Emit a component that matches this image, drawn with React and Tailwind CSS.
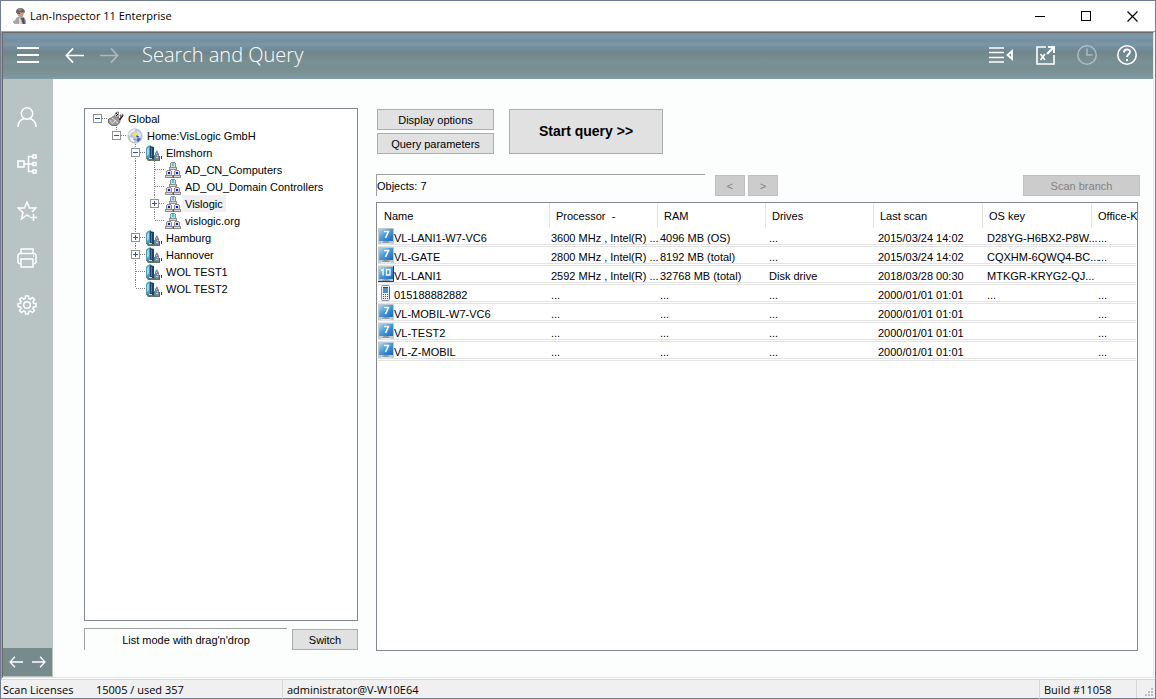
// ─── Data ─────────────────────────────────────────────────────
// guides: one cell per indent level, the last one belongs to the node itself
const TREE = [
  { label: 'Global', icon: 'global', guides: ['root'], toggle: '-' },
  { label: 'Home:VisLogic GmbH', icon: 'globe', guides: ['blank', 'end'], toggle: '-' },
  { label: 'Elmshorn', icon: 'city', guides: ['blank', 'blank', 'tee'], toggle: '-' },
  { label: 'AD_CN_Computers', icon: 'domain', guides: ['blank', 'blank', 'line', 'tee'] },
  { label: 'AD_OU_Domain Controllers', icon: 'domain', guides: ['blank', 'blank', 'line', 'tee'] },
  { label: 'Vislogic', icon: 'domain', guides: ['blank', 'blank', 'line', 'tee'], toggle: '+', selected: true },
  { label: 'vislogic.org', icon: 'domain', guides: ['blank', 'blank', 'line', 'end'] },
  { label: 'Hamburg', icon: 'city', guides: ['blank', 'blank', 'tee'], toggle: '+' },
  { label: 'Hannover', icon: 'city', guides: ['blank', 'blank', 'tee'], toggle: '+' },
  { label: 'WOL TEST1', icon: 'city', guides: ['blank', 'blank', 'tee'] },
  { label: 'WOL TEST2', icon: 'city', guides: ['blank', 'blank', 'end'] },
]

// pad: inset of the body text, the body grid is slightly wider than the header grid
const COLUMNS = [
  { name: 'Name', width: 'w-[172px]', pad: '' },
  { name: 'Processor  -', width: 'w-[108px]', pad: 'pl-px' },
  { name: 'RAM', width: 'w-[108px]', pad: 'pl-[2px]' },
  { name: 'Drives', width: 'w-[108px]', pad: 'pl-[3px]' },
  { name: 'Last scan', width: 'w-[109px]', pad: 'pl-[4px]' },
  { name: 'OS key', width: 'w-[109px]', pad: 'pl-[4px]' },
  { name: 'Office-K', width: '', pad: 'pl-[6px]' },
]

const ROWS = [
  { icon: '7', cells: ['VL-LANI1-W7-VC6', '3600 MHz , Intel(R) ...', '4096 MB (OS)', '...', '2015/03/24 14:02', 'D28YG-H6BX2-P8W...', '...'] },
  { icon: '7', cells: ['VL-GATE', '2800 MHz , Intel(R) ...', '8192 MB (total)', '...', '2015/03/24 14:02', 'CQXHM-6QWQ4-BC...', '...'] },
  { icon: '10', cells: ['VL-LANI1', '2592 MHz , Intel(R) ...', '32768 MB (total)', 'Disk drive', '2018/03/28 00:30', 'MTKGR-KRYG2-QJ...', ''] },
  { icon: 'phone', cells: ['015188882882', '...', '...', '...', '2000/01/01 01:01', '...', '...'] },
  { icon: '7', cells: ['VL-MOBIL-W7-VC6', '...', '...', '...', '2000/01/01 01:01', '', '...'] },
  { icon: '7', cells: ['VL-TEST2', '...', '...', '...', '2000/01/01 01:01', '', '...'] },
  { icon: '7', cells: ['VL-Z-MOBIL', '...', '...', '...', '2000/01/01 01:01', '', '...'] },
]

// ─── Buttons ──────────────────────────────────────────────────
function Button({ className = '', ...props }) {
  return (
    <button
      className={`border border-[#adadad] bg-[#e1e1e1] disabled:border-[#bfbfbf] disabled:bg-[#cccccc] disabled:text-[#838383] ${className}`}
      {...props}
    />
  )
}

// ─── Tree icons ───────────────────────────────────────────────
function GlobalIcon() {
  return (
    <svg width="16" height="16" viewBox="0 0 16 16">
      <path d="M.5 8l3-1 2-2h4l2 3 .5 3-3 3.500H4L.5 12z" fill="#9c9c9c" stroke="#6e6e6e" />
      <path d="M2 9l2.500 3.500L8 9M4 7l6 5" stroke="#dcdcdc" fill="none" />
      <path d="M6 6l2-4.500 2.500-.5-.5 5z" fill="#ececec" stroke="#777" />
      <path d="M8 2h1v1H8zM9 3h1v1H9zM8 4h1v1H8z" fill="#111" />
      <path d="M11.500 9l3.500-5" stroke="#222" strokeWidth="1.600" />
      <path d="M12 4l1.500 2" stroke="#c33" strokeWidth="1.500" />
      <path d="M14 3l1.500 1.500" stroke="#3aa" strokeWidth="1.500" />
    </svg>
  )
}

function GlobeIcon() {
  return (
    <svg width="16" height="16" viewBox="0 0 16 16">
      <circle cx="8" cy="8" r="7.200" fill="#b9c6de" stroke="#a3aec4" strokeWidth=".6" />
      <path d="M1.500 7c.5-3.500 3.500-6 7-6L7 4 4 5 3 8z" fill="#eef1f4" />
      <path d="M10 2.500l3.500 2.500 1 4-3-.5L9.500 6z" fill="#dfe5ee" />
      <path d="M3 9l3.500 1.500 1 4-4-2z" fill="#f6f8fa" />
      <path d="M10.500 10l3.500.5L11.500 14l-2-1.500z" fill="#4766b0" />
      <path d="M8 3.500v6M5 6.500h6" stroke="#f1e272" strokeWidth="1.500" />
      <path d="M9.500 8l2 1" stroke="#2f4f9c" strokeWidth="1.500" />
      <path d="M6 11l3 1" stroke="#8c97a8" />
    </svg>
  )
}

function CityIcon() {
  return (
    <svg width="16" height="16" viewBox="0 0 16 16">
      <path d="M0 3l2-2 3-1v14H0z" fill="#4aa0c4" />
      <path d="M1 4l2-2v7l-2 2z" fill="#9bd8ec" />
      <path d="M4 1l4 1v13H4z" fill="#1d4468" />
      <path d="M5.500 3v9" stroke="#3c86b4" />
      <path d="M8 10h2v5H8z" fill="#5c8399" />
      <path d="M9 15V8l2-3 2 4v6z" fill="#7d8896" />
      <path d="M10 8.500h1M11 10.500h1M10 12.500h2" stroke="#c7d2dc" />
      <path d="M13 11h1v4h-1z" fill="#41618c" />
      <path d="M15 11h1v3h-1z" fill="#2b3a4c" />
      <path d="M0 13c2 0 4 0 6 1l8 1v1H2z" fill="#5e7763" />
      <path d="M3 13.500h3" stroke="#d3dddd" />
    </svg>
  )
}

function DomainIcon() {
  return (
    <svg width="16" height="16" viewBox="0 0 16 16" shapeRendering="crispEdges">
      <path d="M6 0h4v1h1v4h1v3H4V5h1V1h1z" fill="#8c8c8c" />
      <path d="M2 8h4v1h1v4h1v3H0v-3h1V9h1z" fill="#8c8c8c" />
      <path d="M10 8h4v1h1v4h1v3H8v-3h1V9h1z" fill="#8c8c8c" />
      <path d="M6 1h4v4H6zM5 6h6v1H5z" fill="#dadada" />
      <path d="M2 9h4v4H2zM1 14h6v1H1zM10 9h4v4h-4zM9 14h6v1H9z" fill="#dadada" />
      <path d="M7 1h2v3H7z" fill="#2fd9e0" />
      <path d="M3 10h2v2H3zM11 10h2v2h-2z" fill="#1414d8" />
      <path d="M8 13v3" stroke="#5a5a5a" />
    </svg>
  )
}

function TreeIcon({ name }) {
  if (name === 'global') return <GlobalIcon />
  if (name === 'globe') return <GlobeIcon />
  if (name === 'city') return <CityIcon />
  return <DomainIcon />
}

// ─── Tree ─────────────────────────────────────────────────────
function GuideCell({ kind, toggle }) {
  const up = kind === 'tee' || kind === 'end' || kind === 'line'
  const down = kind === 'tee' || kind === 'line'
  return (
    <svg width="19" height="17" viewBox="0 0 19 17" className="block" shapeRendering="crispEdges">
      <g stroke="#808080" strokeDasharray="1 1" fill="none">
        {up && <path d="M9.500 0v8" />}
        {down && <path d="M9.500 8v9" />}
        {(kind === 'root' || kind === 'tee' || kind === 'end') && <path d="M10 8.500h9" />}
      </g>
      {toggle && (
        <>
          <rect x="5.500" y="4.500" width="8" height="8" fill="#fff" stroke="#919191" />
          <path d="M7 8.500h5" stroke="#3b4fa8" />
          {toggle === '+' && <path d="M9.500 6v5" stroke="#3b4fa8" />}
        </>
      )}
    </svg>
  )
}

function TreeRow({ node }) {
  const own = node.guides.length - 1
  return (
    <li role="treeitem" aria-selected={!!node.selected} className="flex h-[17px] items-center">
      {node.guides.map((kind, i) =>
        i === own && node.toggle ? (
          <button key={i} aria-label={`Toggle ${node.label}`}>
            <GuideCell kind={kind} toggle={node.toggle} />
          </button>
        ) : (
          <GuideCell key={i} kind={kind} />
        )
      )}
      <span className="ml-px mr-px"><TreeIcon name={node.icon} /></span>
      <span className={`px-[3px] pt-px leading-[16px] whitespace-nowrap ${node.selected ? 'bg-[#f0f0f0]' : ''}`}>
        {node.label}
      </span>
    </li>
  )
}

// ─── Device icons ─────────────────────────────────────────────
function DeviceIcon({ type }) {
  if (type === 'phone') {
    return (
      <svg width="16" height="16" viewBox="0 0 16 16" className="shrink-0">
        <rect x="3.500" y=".5" width="8" height="15" rx="1" fill="#eceff1" stroke="#8d969e" />
        <path d="M5 2h5v6H5z" fill="#4a94cc" />
        <path d="M5 2h5v1H5z" fill="#20506f" />
        <path d="M5 9.500h5M5 11.500h5M5 13.500h5" stroke="#4f5962" strokeDasharray="1 1" />
        <path d="M11.500 2v12" stroke="#5a646d" />
      </svg>
    )
  }
  return (
    <svg width="16" height="16" viewBox="0 0 16 16" className="shrink-0">
      <defs>
        <linearGradient id="screen" x1="0" y1="0" x2="1" y2="1">
          <stop offset="0" stopColor="#a9daf5" />
          <stop offset=".45" stopColor="#4a9ddd" />
          <stop offset="1" stopColor="#1b66ba" />
        </linearGradient>
      </defs>
      <path d="M0 0h16v16H0z" fill="#c0c9ce" />
      <path d="M1 1h14v12H1z" fill="url(#screen)" />
      <path d="M4 15l2-2h4l2 2z" fill="#8f9aa1" />
      <path d="M3 15.500h10" stroke="#e4e9ec" />
      {type === '7' ? (
        <path d="M6 3.500h4.500L7.500 10" stroke="#fff" strokeWidth="1.600" fill="none" />
      ) : (
        <>
          <path d="M3 4.500l2-1v6M8.500 3.500h3.500v5.500H8.500z" stroke="#fff" strokeWidth="1.400" fill="none" />
          <path d="M15.500 0v15.500H0" stroke="#2d3a45" fill="none" />
        </>
      )}
    </svg>
  )
}

// ─── Title bar ────────────────────────────────────────────────
const WINDOW_BUTTONS = [
  { label: 'Minimize', d: 'M0 5.500h10', crisp: true },
  { label: 'Maximize', d: 'M.5.5h9v9H.5z', crisp: true },
  { label: 'Close', d: 'M.5.5l10 10M10.500.5l-10 10' },
]

function TitleBar() {
  return (
    <div className="flex h-[30px] shrink-0 items-center bg-white pl-[12px] font-['Open_Sans',sans-serif] text-[11px]">
      <svg width="14" height="16" viewBox="0 0 14 16" className="mr-[3px]">
        <path d="M3 4c0-3 2-4 4.500-4S12 2 12 4l-1 1H3z" fill="#6d625e" />
        <path d="M5 1l3-1 1 2-3 1z" fill="#9b8d86" />
        <path d="M4 4.500h7l-1 4-3 1-2-2z" fill="#c59a86" />
        <path d="M4 5l3 .5" stroke="#4a3b37" />
        <path d="M3 10l4-2 4 1 2 3v4H1z" fill="#a7a3a3" />
        <path d="M6 9l2 3 1 4H6z" fill="#e0d9d6" />
        <path d="M8 10l2 6h2l-1-6z" fill="#564d52" />
        <path d="M0 13l3-1 1 3H0z" fill="#b4a8a5" />
      </svg>
      <span>Lan-Inspector 11 Enterprise</span>
      <div className="ml-auto flex">
        {WINDOW_BUTTONS.map((b) => (
          <button key={b.label} aria-label={b.label} className="flex h-[28px] w-[46px] items-center justify-center">
            <svg width="11" height="11" viewBox="0 0 11 11" fill="none" stroke="#000"
              strokeWidth={b.crisp ? 1 : 1.2} shapeRendering={b.crisp ? 'crispEdges' : 'auto'}>
              <path d={b.d} />
            </svg>
          </button>
        ))}
      </div>
    </div>
  )
}

// ─── Header bar ───────────────────────────────────────────────
function Arrow({ flip, size = 19 }) {
  return (
    <svg width={size} height={size} viewBox="0 0 20 20" fill="none" stroke="currentColor" strokeWidth="1.800"
      className={flip ? 'rotate-180' : ''}>
      <path d="M20 10H1.500M8.500 2.500L1.500 10l7 7.500" />
    </svg>
  )
}

function Header() {
  return (
    <header className="flex h-[46px] shrink-0 items-center bg-[linear-gradient(180deg,#7892a6_0%,#7d97a9_8%,#7690a3_16%,#7b96a6_26%,#738c9a_34%,#6f868b_42%,#758b8f_52%,#799094_64%,#768e91_74%,#7d9397_90%,#809ba9_100%)] pb-[2px] pl-[14px] pr-[16px] text-white">
      <button aria-label="Menu" className="mr-[26px]">
        <svg width="22" height="16" viewBox="0 0 22 16" stroke="currentColor" strokeWidth="2" shapeRendering="crispEdges">
          <path d="M0 1h22M0 8h22M0 15h22" />
        </svg>
      </button>
      <button aria-label="Back" className="mr-[16px]"><Arrow /></button>
      <button aria-label="Forward" className="mr-[23px] opacity-40"><Arrow flip /></button>
      <h1 className="font-['Open_Sans',sans-serif] text-[20px] leading-[28px] font-light">Search and Query</h1>

      <div className="ml-auto flex items-center">
        <button aria-label="Toggle list" className="mr-[23px]">
          <svg width="24" height="18" viewBox="0 0 24 18" fill="none" stroke="currentColor">
            <path d="M0 2h15M0 6.500h15M0 11.500h15M0 16h15" strokeWidth="1.600" />
            <path d="M23 5v8L18.500 9z" strokeWidth="1.800" />
          </svg>
        </button>
        <button aria-label="Export to Excel" className="mr-[22px]">
          <svg width="19" height="20" viewBox="0 0 19 20" fill="none" stroke="currentColor">
            <path d="M10 2H1v17h17v-9" strokeWidth="1.600" />
            <path d="M11 9l6-6" strokeWidth="2.200" />
            <path d="M12 2h6v6" strokeWidth="2" />
            <path d="M4.500 9l4.500 6M9 9l-4.500 6" strokeWidth="1.500" />
          </svg>
        </button>
        <button aria-label="History" className="mr-[20px] opacity-40">
          <svg width="20" height="20" viewBox="0 0 20 20" fill="none" stroke="currentColor" strokeWidth="1.600">
            <circle cx="10" cy="10" r="9.200" />
            <path d="M10 3.500V10h5.500" />
          </svg>
        </button>
        <button aria-label="Help">
          <svg width="20" height="20" viewBox="0 0 20 20" fill="none" stroke="currentColor" strokeWidth="1.600">
            <circle cx="10" cy="10" r="9.200" />
            <path d="M7 7.500c0-4 6-4 6-.5 0 2-3 2.500-3 5" strokeWidth="1.900" />
            <path d="M10 14v2" strokeWidth="2" />
          </svg>
        </button>
      </div>
    </header>
  )
}

// ─── Sidebar ──────────────────────────────────────────────────
const SIDE_ITEMS = [
  {
    label: 'User',
    art: (
      <>
        <circle cx="10" cy="6.500" r="5.700" />
        <path d="M1 20c0-5 3-7.500 6-8.500M19 20c0-5-3-7.500-6-8.500" />
      </>
    ),
  },
  {
    label: 'Network',
    art: (
      <path d="M1 7h6v6H1zM7 10h9M16 2.500h-4.500v15H16M16 1h3v3h-3zM16 8.500h3v3h-3zM16 16h3v3h-3z" />
    ),
  },
  {
    label: 'Favourites',
    art: (
      <>
        <path d="M12.500 15.500L10 14l-5.500 4 1.500-6.500L1 7h6.500L10 1l2.500 6H19l-4 4" />
        <path d="M16.500 13v7M13 16.500h7" />
      </>
    ),
  },
  {
    label: 'Print',
    art: (
      <>
        <path d="M4 5.500V1h12v4.500M3.500 15.500H2l-1-1V7l1.500-1.500h15L19 7v7.500l-1 1h-1.500" />
        <path d="M4 11h12v8H4zM16 8h1" />
      </>
    ),
  },
  {
    label: 'Settings',
    art: (
      <>
        <circle cx="10" cy="10" r="3.300" />
        <path d="M8.500 1h3l.4 2.600 1.500.6 2.200-1.600 2 2-1.600 2.200.6 1.500 2.400.4v2.800l-2.500.4-.6 1.500 1.600 2.200-2 2-2.200-1.600-1.500.6-.4 2.400h-2.800l-.4-2.400-1.500-.6-2.200 1.600-2-2 1.600-2.200-.6-1.500L1 11.500V8.700l2.500-.5.6-1.500-1.600-2.200 2-2 2.200 1.600 1.500-.6z" />
      </>
    ),
  },
]

function Sidebar() {
  return (
    <nav className="flex w-[50px] shrink-0 flex-col bg-[#b8c4c3] pb-px pr-px text-white">
      <div className="flex flex-col items-start gap-[27px] pl-[14px] pt-[28px]">
        {SIDE_ITEMS.map((item) => (
          <button key={item.label} aria-label={item.label}>
            <svg width="20" height="20" viewBox="0 0 20 20" fill="none" stroke="currentColor" strokeWidth="1.500">
              {item.art}
            </svg>
          </button>
        ))}
      </div>
      <div className="mt-auto flex h-[28px] items-center gap-[9px] bg-[#778a8c] pl-[6px]">
        <button aria-label="Previous"><Arrow size={14} /></button>
        <button aria-label="Next"><Arrow size={14} flip /></button>
      </div>
    </nav>
  )
}

// ─── Left pane ────────────────────────────────────────────────
function TreePane() {
  return (
    <section className="mb-px flex w-[274px] shrink-0 flex-col">
      <ul role="tree" aria-label="Network tree" className="flex-1 border border-[#828790] bg-white pl-[3px] pt-px">
        {TREE.map((node) => <TreeRow key={node.label} node={node} />)}
      </ul>
      <div className="mt-[7px] flex h-[22px] gap-[5px]">
        <div className="flex-1 border-l border-t border-[#a0a0a0] text-center leading-[22px]">
          List mode with drag'n'drop
        </div>
        <Button className="mt-px w-[66px] pt-px">Switch</Button>
      </div>
    </section>
  )
}

// ─── Right pane ───────────────────────────────────────────────
function ResultTable() {
  return (
    <div className="mr-[2px] mt-[6px] flex-1 overflow-hidden border border-[#828790] bg-white px-px">
      <table className="w-full table-fixed border-separate border-spacing-0 text-left whitespace-nowrap">
        <colgroup>
          {COLUMNS.map((col) => <col key={col.name} className={col.width} />)}
        </colgroup>
        <thead>
          <tr className="h-[25px]">
            {COLUMNS.map((col) => (
              <th key={col.name} scope="col"
                className="border-r border-[#e5e5e5] p-0 pl-[6px] pt-[2px] font-normal whitespace-pre last:border-0">
                {col.name}
              </th>
            ))}
          </tr>
        </thead>
        <tbody>
          {ROWS.map((row) => (
            <tr key={row.cells[0]}>
              {row.cells.map((text, i) => (
                <td key={i} className="border-b border-[#e3e3e3] p-0 pb-px">
                  <div className={`flex h-[17px] border-b border-[#e3e3e3] ${COLUMNS[i].pad}`}>
                    {i === 0 && <DeviceIcon type={row.icon} />}
                    <span className="pt-[2px] leading-[16px]">{text}</span>
                  </div>
                </td>
              ))}
            </tr>
          ))}
        </tbody>
      </table>
    </div>
  )
}

function QueryPane() {
  return (
    <section className="flex min-w-0 flex-1 flex-col">
      <div className="flex gap-[15px] pl-px pt-px">
        <div className="flex w-[117px] flex-col gap-[3px]">
          <Button className="h-[21px] pt-[2px]">Display options</Button>
          <Button className="h-[21px] pt-[2px]">Query parameters</Button>
        </div>
        <Button className="h-[45px] w-[154px] text-[14px] font-bold">Start query &gt;&gt;</Button>
      </div>

      <div className="mt-[20px] flex h-[22px] items-end">
        <div className="h-[22px] w-[329px] border-l border-t border-[#a0a0a0] leading-[22px]">Objects: 7</div>
        <Button disabled className="ml-[10px] h-[21px] w-[30px] pt-[2px]">&lt;</Button>
        <Button disabled className="ml-[3px] h-[21px] w-[30px] pt-[2px]">&gt;</Button>
        <Button disabled className="ml-auto h-[21px] w-[117px] pt-[2px]">Scan branch</Button>
      </div>

      <ResultTable />
    </section>
  )
}

// ─── Status bar ───────────────────────────────────────────────
function StatusBar() {
  return (
    <footer className="flex h-[19px] shrink-0 items-center border-t border-[#d7d7d7] bg-[#f0f0f0] pl-[2px] font-['Open_Sans',sans-serif] text-[11px] leading-[18px]">
      <span className="w-[93px] pt-px">Scan Licenses</span>
      <span className="w-[186px] pt-px">15005 / used 357</span>
      <span className="flex-1 border-l border-[#d7d7d7] pl-[4px] pt-px">administrator@V-W10E64</span>
      <span className="w-[97px] border-l border-[#d7d7d7] pl-[4px] pt-px">Build #11058</span>
      <span className="flex h-[18px] w-[19px] items-end justify-end border-l border-[#d7d7d7] pb-[2px] pr-[2px]">
        <svg width="8" height="8" viewBox="0 0 8 8" fill="#bfbfbf">
          <path d="M6 0h2v2H6zM3 3h2v2H3zM6 3h2v2H6zM0 6h2v2H0zM3 6h2v2H3zM6 6h2v2H6z" />
        </svg>
      </span>
    </footer>
  )
}

export default function App() {
  return (
    <div className="flex h-screen flex-col border border-[#717c92] bg-white font-['Liberation_Sans',sans-serif] text-[11px] text-black">
      <TitleBar />
      <div className="flex min-h-0 flex-1 flex-col border-l border-t border-[#a0a0a0] pr-px pb-px">
        <div className="flex min-h-0 flex-1 flex-col border border-b-[#e3e3e3] border-l-[#696969] border-r-[#e3e3e3] border-t-[#696969]">
          <Header />
          <div className="flex min-h-0 flex-1 bg-[#fcfefd]">
            <Sidebar />
            <main className="flex min-w-0 flex-1 gap-[18px] pb-[26px] pl-[31px] pr-[13px] pt-[29px]">
              <TreePane />
              <QueryPane />
            </main>
          </div>
        </div>
      </div>
      <StatusBar />
    </div>
  )
}
